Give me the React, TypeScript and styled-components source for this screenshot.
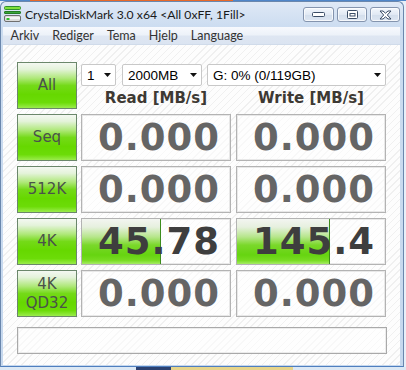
import React from "react";
import styled, { createGlobalStyle } from "styled-components";

const Global = createGlobalStyle`
  html, body { margin: 0; padding: 0; }
  body { width: 406px; height: 370px; overflow: hidden; background: #e4edf7; }
`;

const Desktop = styled.div`
  width: 406px;
  height: 370px;
  overflow: hidden;
  background:
    linear-gradient(to right, #4f86c9 0 30px, #e8692a 30px 233px, #4f86c9 233px) top / 100% 1px no-repeat,
    linear-gradient(to right, #dce8f4 0 136px, #2b4170 136px 171px, #e6d48a 171px 293px, #dce8f4 293px) bottom / 100% 3px no-repeat,
    #e8eff8;
`;

const Window = styled.div`
  margin-top: 1px;
  width: 404px;
  height: 366px;
  box-sizing: border-box;
  border: 1px solid #6a87ad;
  border-bottom-color: #4f7fbf;
  border-radius: 6px 6px 0 0;
  background: linear-gradient(#dfe9f6, #cbdcf0 26px, #c6d8ee);
  display: flex;
  flex-direction: column;
  padding: 0 3px 1px 2px;
`;

const TitleBar = styled.div`
  height: 25px;
  display: flex;
  align-items: flex-start;
`;

const AppIcon = styled.svg`
  margin: 4px 4px 0 1px;
  flex: none;
`;

const TitleText = styled.div`
  font: 12.2px "Lato", "Liberation Sans", sans-serif;
  color: #1a1a1a;
  line-height: 25px;
  flex: 1;
  white-space: nowrap;
`;

const Captions = styled.div`
  display: flex;
  gap: 3px;
  margin-top: 5px;
`;

const CaptionButton = styled.div<{ $w: number }>`
  width: ${(p) => p.$w}px;
  height: 15px;
  box-sizing: border-box;
  border: 1px solid #8494ae;
  border-radius: 3px;
  background: linear-gradient(#f3f7fc, #e1e9f4 50%, #d3deec 51%, #dde6f2);
  box-shadow: inset 0 0 0 1px rgba(255, 255, 255, 0.7);
  display: flex;
  align-items: center;
  justify-content: center;
`;

const MenuBar = styled.div`
  height: 18px;
  display: flex;
  align-items: center;
  padding-left: 1px;
  background: linear-gradient(#f7f9fd, #edf2f9 45%, #dee6f2 55%, #dbe4f1);
  border-bottom: 1px solid #d0dbea;
  box-sizing: border-box;
`;

const MenuItem = styled.div`
  font: 12.5px "Lato", "Liberation Sans", sans-serif;
  color: #333;
  padding: 0 6.5px;
  line-height: 18px;
`;

const Client = styled.div`
  flex: 1;
  box-sizing: border-box;
  padding: 17px 0 0 14px;
  background: repeating-linear-gradient(135deg, #fdfdfd 0 4px, #f0f0f0 4px 5px);
`;

const Board = styled.div`
  display: grid;
  grid-template-columns: 60px 154px 155px;
  grid-template-rows: repeat(5, 47px);
  row-gap: 5px;
`;

const TestButton = styled.div`
  grid-column: 1;
  width: 60px;
  height: 47px;
  box-sizing: border-box;
  border: 1px solid #6b876b;
  background: linear-gradient(
    to bottom,
    #f4f8f2 0%,
    #e4f3da 14%,
    #aee878 34%,
    #74da18 50%,
    #66d800 70%,
    #6cdc08 88%,
    #9aec4c 100%
  );
  display: flex;
  flex-direction: column;
  align-items: center;
  justify-content: center;
  font: 15px "DejaVu Sans", sans-serif;
  line-height: 19px;
  color: #4a524a;
`;

const ComboRow = styled.div`
  grid-column: 2 / span 2;
  grid-row: 1;
  align-self: start;
  display: flex;
  margin: 2px 0 0 4px;
`;

const Combo = styled.div<{ $w: number; $ml: number }>`
  width: ${(p) => p.$w}px;
  margin-left: ${(p) => p.$ml}px;
  height: 22px;
  box-sizing: border-box;
  border: 1px solid #c8c8c8;
  border-radius: 2px;
  background: #fff;
  display: flex;
  align-items: center;
  justify-content: space-between;
  padding: 0 4px 0 5px;
  font: 13.5px "Liberation Sans", sans-serif;
  color: #000;
`;

const Header = styled.div<{ $col: number }>`
  grid-column: ${(p) => p.$col};
  grid-row: 1;
  justify-self: end;
  align-self: end;
  width: 150px;
  height: 23px;
  display: flex;
  align-items: center;
  justify-content: center;
  font: bold 15px "DejaVu Sans", sans-serif;
  color: #3d3933;
`;

const ResultBox = styled.div`
  position: relative;
  justify-self: end;
  width: 150px;
  box-sizing: border-box;
  border: 1px solid #b3b3b3;
  box-shadow: inset 0 0 0 1px #e8e8e8;
  background: rgba(255, 255, 255, 0.55);
  display: flex;
  align-items: center;
  justify-content: flex-end;
  padding-right: 10px;
  overflow: hidden;
`;

const Bar = styled.div`
  position: absolute;
  left: 0;
  top: 0;
  bottom: 0;
  box-sizing: border-box;
  border-right: 1px solid #3c8c1c;
  background: linear-gradient(
    to bottom,
    #f3f5f1 0%,
    #e6f0de 18%,
    #b6e68a 40%,
    #7ad82a 58%,
    #66d410 80%,
    #78dc22 92%,
    #a6ec64 100%
  );
`;

const Value = styled.div<{ $active: boolean }>`
  position: relative;
  font: bold 37px "DejaVu Sans", sans-serif;
  letter-spacing: 1px;
  line-height: 1;
  color: ${(p) => (p.$active ? "#3e3e3e" : "#656565")};
`;

const StatusBar = styled.div`
  margin-top: 10px;
  width: 370px;
  height: 27px;
  box-sizing: border-box;
  border: 1px solid #a9a9a9;
  box-shadow: inset 0 0 0 1px #ececec;
  background: rgba(255, 255, 255, 0.5);
`;

const Arrow = () => (
  <svg width="7" height="4" viewBox="0 0 7 4">
    <polygon points="0,0 7,0 3.5,4" fill="#111" />
  </svg>
);

const rows = [
  { label: ["Seq"], read: "0.000", write: "0.000", readPct: 0, writePct: 0 },
  { label: ["512K"], read: "0.000", write: "0.000", readPct: 0, writePct: 0 },
  { label: ["4K"], read: "45.78", write: "145.4", readPct: 53.4, writePct: 62.8 },
  { label: ["4K", "QD32"], read: "0.000", write: "0.000", readPct: 0, writePct: 0 },
];

const Result = ({ value, pct }: { value: string; pct: number }) => (
  <ResultBox>
    {pct > 0 && <Bar style={{ width: `${pct}%` }} />}
    <Value $active={pct > 0}>{value}</Value>
  </ResultBox>
);

export default function App() {
  return (
    <>
      <Global />
      <Desktop>
        <Window>
          <TitleBar>
            <AppIcon width="17" height="16" viewBox="0 0 17 16">
              <rect x="0.5" y="0.5" width="16" height="3" rx="1" fill="#7fe03a" stroke="#2f8f2f" />
              <rect x="0.5" y="5.5" width="16" height="2" rx="0.5" fill="#3aa63a" stroke="#237a23" />
              <rect x="0.5" y="9.5" width="16" height="6" rx="1.5" fill="#dcdcdc" stroke="#6f6f6f" />
              <rect x="2" y="11" width="14" height="2" fill="#f4f4f4" />
              <rect x="2.5" y="12" width="3" height="2" fill="#2fbf2f" />
            </AppIcon>
            <TitleText>CrystalDiskMark 3.0 x64 &lt;All 0xFF, 1Fill&gt;</TitleText>
            <Captions>
              <CaptionButton $w={31}>
                <svg width="13" height="5" viewBox="0 0 13 5">
                  <rect x="0.5" y="0.5" width="12" height="4" rx="1" fill="#fff" stroke="#3b4d66" />
                </svg>
              </CaptionButton>
              <CaptionButton $w={30}>
                <svg width="11" height="9" viewBox="0 0 11 9">
                  <rect x="0.5" y="0.5" width="10" height="8" rx="1" fill="#fff" stroke="#3b4d66" />
                  <rect x="3" y="3.5" width="5" height="2.5" fill="none" stroke="#3b4d66" />
                </svg>
              </CaptionButton>
              <CaptionButton $w={30}>
                <svg width="13" height="10" viewBox="0 0 13 10">
                  <path
                    d="M1 1 H4 L6.5 3.2 L9 1 H12 L8.3 5 L12 9 H9 L6.5 6.8 L4 9 H1 L4.7 5 Z"
                    fill="#fff"
                    stroke="#3b4d66"
                    strokeWidth="1"
                    strokeLinejoin="round"
                  />
                </svg>
              </CaptionButton>
            </Captions>
          </TitleBar>
          <MenuBar>
            <MenuItem>Arkiv</MenuItem>
            <MenuItem>Rediger</MenuItem>
            <MenuItem>Tema</MenuItem>
            <MenuItem>Hjelp</MenuItem>
            <MenuItem>Language</MenuItem>
          </MenuBar>
          <Client>
            <Board>
              <TestButton>All</TestButton>
              <ComboRow>
                <Combo $w={35} $ml={0}>
                  <span>1</span>
                  <Arrow />
                </Combo>
                <Combo $w={80} $ml={6}>
                  <span>2000MB</span>
                  <Arrow />
                </Combo>
                <Combo $w={179} $ml={5}>
                  <span>G: 0% (0/119GB)</span>
                  <Arrow />
                </Combo>
              </ComboRow>
              <Header $col={2}>Read [MB/s]</Header>
              <Header $col={3}>Write [MB/s]</Header>
              {rows.map((r, i) => (
                <React.Fragment key={i}>
                  <TestButton>
                    {r.label.map((l) => (
                      <span key={l}>{l}</span>
                    ))}
                  </TestButton>
                  <Result value={r.read} pct={r.readPct} />
                  <Result value={r.write} pct={r.writePct} />
                </React.Fragment>
              ))}
            </Board>
            <StatusBar />
          </Client>
        </Window>
      </Desktop>
    </>
  );
}
